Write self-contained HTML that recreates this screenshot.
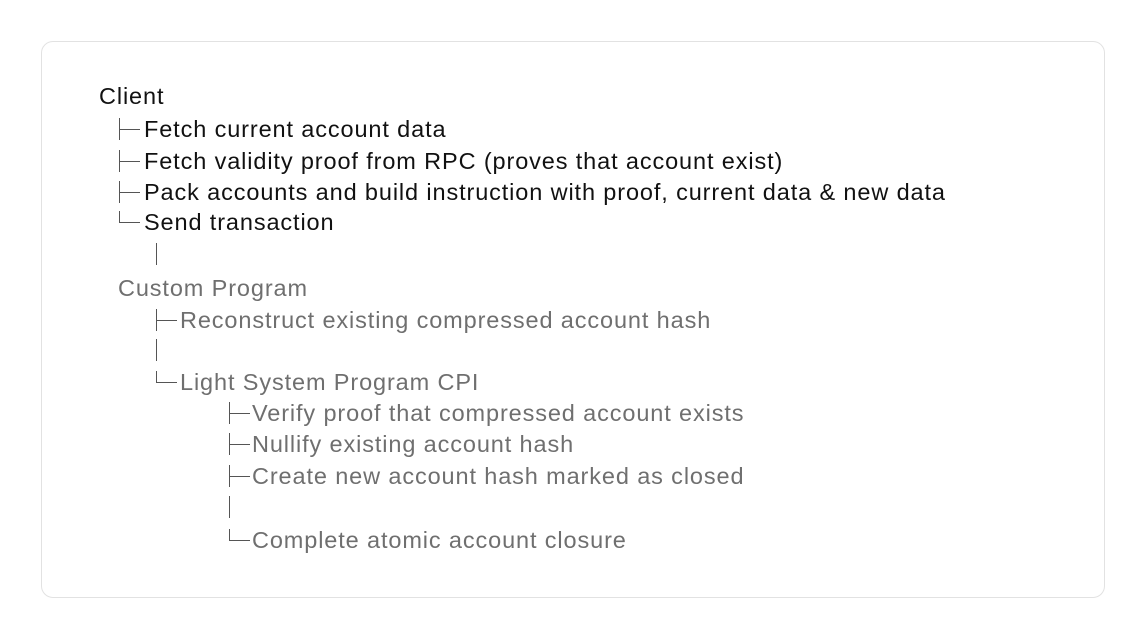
<!DOCTYPE html>
<html><head><style>
body{margin:0;width:1146px;height:639px;background:#fff;position:relative;overflow:hidden;font-family:"Liberation Sans",sans-serif;}
.box{position:absolute;left:41px;top:41px;width:1062px;height:555px;border:1.5px solid #e2e2e2;border-radius:12px;}
.l{position:absolute;height:32px;line-height:32px;font-size:23.5px;white-space:nowrap;letter-spacing:0.88px}
.k{color:#111}.g{color:#6f6f6f}
.v{position:absolute;width:1.4px;background:#555}
.h{position:absolute;height:1.4px;background:#555}
</style></head><body>
<div class="box"></div>
<div class="l k" style="left:99px;top:80px">Client</div>

<div class="v" style="left:119px;top:118px;height:22px"></div><div class="h" style="left:119px;top:129px;width:21px"></div>
<div class="l k" style="left:144px;top:113px">Fetch current account data</div>
<div class="v" style="left:119px;top:150px;height:22px"></div><div class="h" style="left:119px;top:161px;width:21px"></div>
<div class="l k" style="left:144px;top:145px">Fetch validity proof from RPC (proves that account exist)</div>
<div class="v" style="left:119px;top:181px;height:22px"></div><div class="h" style="left:119px;top:192px;width:21px"></div>
<div class="l k" style="left:144px;top:176px">Pack accounts and build instruction with proof, current data &amp; new data</div>
<div class="v" style="left:119px;top:211px;height:12px"></div><div class="h" style="left:119px;top:222px;width:21px"></div>
<div class="l k" style="left:144px;top:206px">Send transaction</div>
<div class="v" style="left:156px;top:243px;height:22px"></div>

<div class="l g" style="left:118px;top:272px">Custom Program</div>
<div class="v" style="left:156px;top:309px;height:22px"></div><div class="h" style="left:156px;top:320px;width:21px"></div>
<div class="l g" style="left:180px;top:304px">Reconstruct existing compressed account hash</div>
<div class="v" style="left:156px;top:339px;height:22px"></div>
<div class="v" style="left:156px;top:371px;height:12px"></div><div class="h" style="left:156px;top:382px;width:21px"></div>
<div class="l g" style="left:180px;top:366px">Light System Program CPI</div>

<div class="v" style="left:229px;top:402px;height:22px"></div><div class="h" style="left:229px;top:413px;width:21px"></div>
<div class="l g" style="left:252px;top:397px">Verify proof that compressed account exists</div>
<div class="v" style="left:229px;top:433px;height:22px"></div><div class="h" style="left:229px;top:444px;width:21px"></div>
<div class="l g" style="left:252px;top:428px">Nullify existing account hash</div>
<div class="v" style="left:229px;top:465px;height:22px"></div><div class="h" style="left:229px;top:476px;width:21px"></div>
<div class="l g" style="left:252px;top:460px">Create new account hash marked as closed</div>
<div class="v" style="left:229px;top:496px;height:22px"></div>
<div class="v" style="left:229px;top:529px;height:12px"></div><div class="h" style="left:229px;top:540px;width:21px"></div>
<div class="l g" style="left:252px;top:524px">Complete atomic account closure</div>
</body></html>
